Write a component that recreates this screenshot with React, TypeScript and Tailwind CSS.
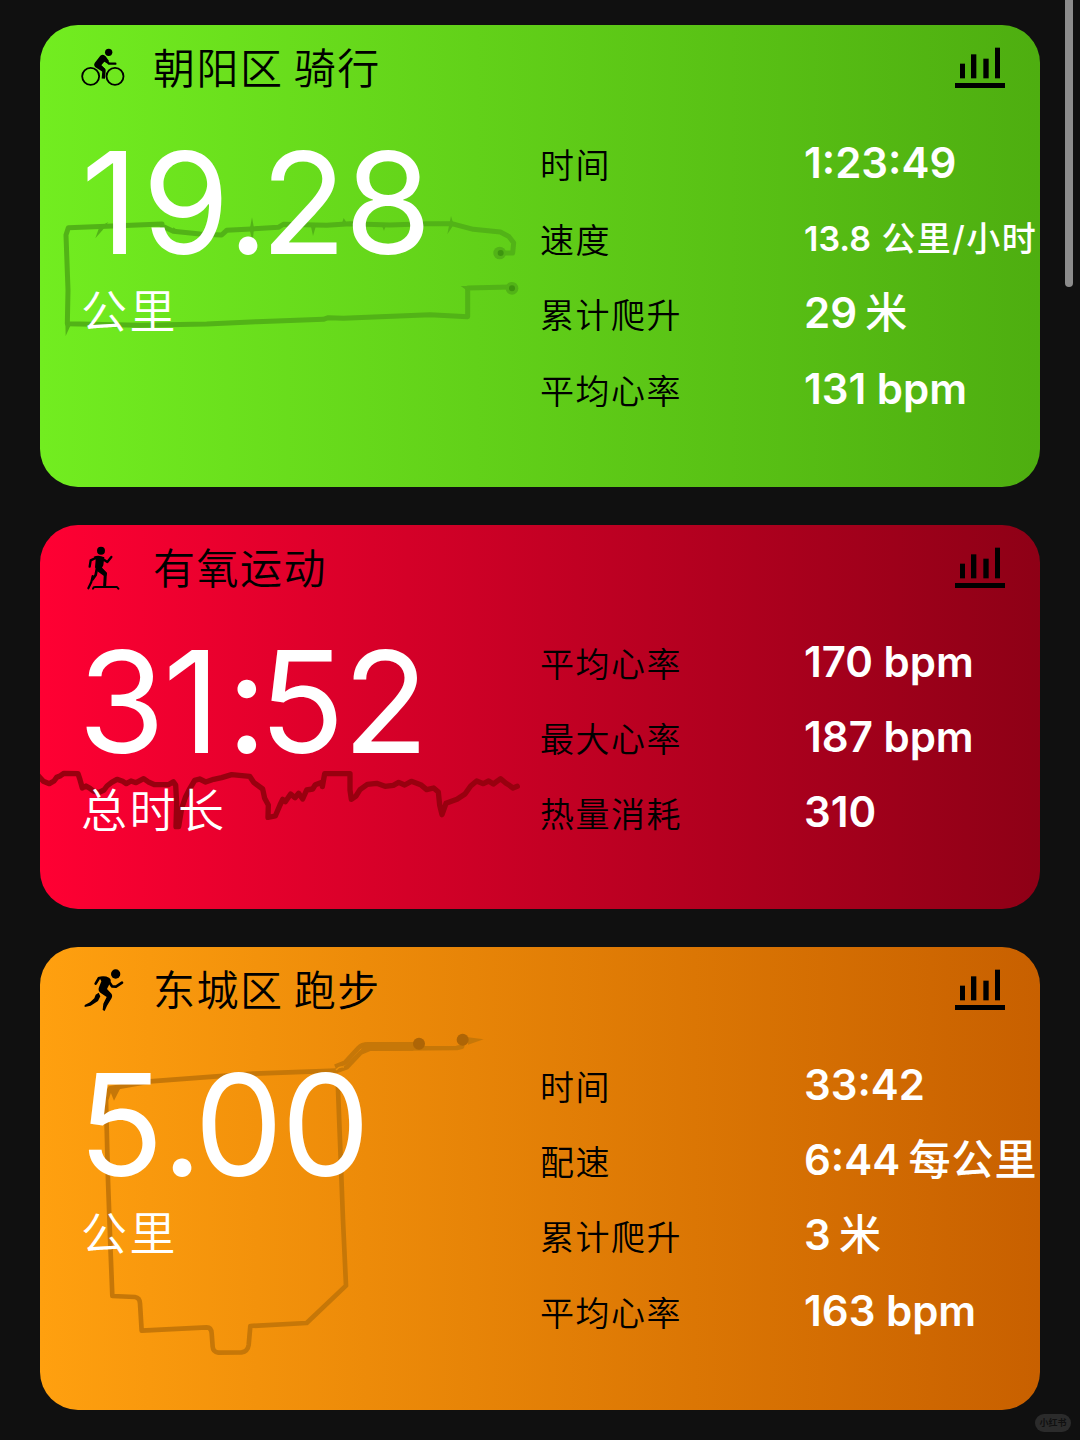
import type { ReactNode } from "react";

type Stat = {
  label: string;
  value: string;
  unit?: string;
  small?: boolean;
};

type WorkoutCardProps = {
  title: string;
  icon: ReactNode;
  trace: ReactNode;
  total: string;
  unit: string;
  stats: Stat[];
  className: string;
};

// letter spacing for the big total, keyed by glyph
const KERNING: Record<string, string> = {
  "1": "tracking-[6px] first:ml-[3px] first:tracking-[4px]",
  ".": "tracking-[-8px]",
  ":": "tracking-[-8px]",
};

function BikeIcon() {
  return (
    <svg viewBox="152 108 132 132" className="size-11">
      <g fill="none" stroke="currentColor">
        <circle cx="181" cy="199" r="25.5" strokeWidth="5.5" />
        <circle cx="254" cy="199" r="25.5" strokeWidth="5.5" />
        <path d="M226 151 L236 161 L255 161" strokeWidth="7" strokeLinecap="round" strokeLinejoin="round" />
        <path d="M203 164 L221 181 L219 206" strokeWidth="10" strokeLinejoin="round" />
      </g>
      <circle cx="235" cy="127" r="11" />
      <path d="M210 137 Q219 131 226 139 L236 153 L230 160 L222 155 L213 166 L225 177 L219 187 L194 171 Q189 165 193 159 Z" />
    </svg>
  );
}

function StepIcon() {
  return (
    <svg viewBox="152 78 132 132" className="size-11">
      <circle cx="212" cy="92" r="12" />
      <path d="M190 110 Q206 104 222 112 L219 136 L215 143 L230 159 L228 167 L220 167 L199 152 L194 142 L196 119 Z" />
      <g fill="none" stroke="currentColor" strokeLinecap="round" strokeLinejoin="round">
        <path d="M216 116 L231 126 L243 111" strokeWidth="7" />
        <path d="M196 114 L181 121 L178 140" strokeWidth="7" />
        <path d="M210 146 L225 161 L223 197" strokeWidth="9" />
        <path d="M199 149 L196 165 L187 178" strokeWidth="8" />
        <path d="M187 168 L183 186 L174 205" strokeWidth="6.5" />
        <path d="M188 206 Q189 201 194 201 L260 201 L264 206" strokeWidth="6" />
      </g>
    </svg>
  );
}

function RunIcon() {
  return (
    <svg viewBox="152 84 132 132" className="size-11">
      <circle cx="256" cy="102" r="14" />
      <path d="M207 111 Q222 106 236 113 Q244 118 240 127 L230 147 L244 162 Q247 168 244 174 L230 197 L223 213 L217 210 L219 191 L229 171 L210 158 Q202 152 206 142 L213 124 Z" />
      <path d="M205 158 L210 169 L203 183 L181 197 L163 201 L163 195 L179 187 L192 175 L196 164 Z" />
      <g fill="none" stroke="currentColor" strokeLinecap="round" strokeLinejoin="round">
        <path d="M216 114 L206 114 L196 131" strokeWidth="8" />
        <path d="M237 127 L245 139 L257 140 L275 128" strokeWidth="8" />
      </g>
    </svg>
  );
}

function ChartIcon() {
  return (
    <svg viewBox="45 138 150 126" className="h-[42px] w-[50px]">
      <rect x="60" y="188" width="15" height="44" />
      <rect x="93" y="160" width="16" height="72" />
      <rect x="130" y="173" width="16" height="59" />
      <rect x="165" y="140" width="15" height="92" />
      <rect x="45" y="246" width="150" height="15" />
    </svg>
  );
}

function RideTrace() {
  return (
    <svg
      viewBox="0 0 1500 660"
      className="absolute left-0 top-[105px] h-[220px] w-[500px] text-[#52b317]"
    >
      <g fill="none" stroke="currentColor" strokeWidth="15" strokeLinejoin="round">
        <path d="M1378 369 L1418 369 L1421 338 L1407 320 L1381 306 L1300 298 L1235 281 L1160 281 L1050 285 L930 281 L860 286 L730 283 L715 292 L560 301 L545 315 L480 312 L400 304 L366 288 L366 282 L200 289 L85 293 L78 315 L84 480 L82 581 L300 586 L500 582 L650 575 L850 568 L865 563 L910 565 L1020 560 L1170 554 L1283 560 L1283 474 L1414 471" />
      </g>
      <path d="M166 325 L178 291 L205 276 L188 300 Z M636 262 L642 295 L638 335 L629 299 Z M812 285 L828 287 L819 318 Z M1025 286 L1038 286 L1032 302 Z M911 264 L921 280 L906 280 Z M1233 258 L1241 284 L1222 313 Z M76 575 L92 585 L77 618 Z M1262 468 L1290 468 L1283 483 Z M400 292 L425 310 L398 308 Z" fill="currentColor" />
      <circle cx="1379" cy="369" r="19" fill="currentColor" />
      <circle cx="1416" cy="475" r="19" fill="currentColor" />
      <circle cx="1382" cy="369" r="9" fill="#3d950f" />
      <circle cx="1416" cy="475" r="9" fill="#3d950f" />
    </svg>
  );
}

function HeartTrace() {
  return (
    <svg
      viewBox="30 0 1470 660"
      className="absolute left-0 top-[105px] h-[220px] w-[490px] text-[#98000f]"
    >
      <path
        d="M25 437 L40 454 L58 461 L72 453 L80 442 L90 438 L102 430 L144 431 L150 449 L157 474 L168 468 L180 475 L190 483 L206 488 L222 480 L231 468 L245 457 L261 448 L278 454 L289 461 L303 453 L318 458 L341 446 L357 457 L374 464 L415 464 L430 455 L437 465 L440 520 L438 590 L446 590 L455 535 L467 500 L480 475 L494 451 L509 447 L527 456 L551 448 L575 443 L605 434 L659 439 L671 457 L698 477 L704 505 L715 525 L714 562 L736 558 L750 525 L758 508 L766 515 L782 492 L795 503 L806 490 L818 507 L830 480 L848 477 L856 464 L876 457 L877 470 L884 431 L960 431 L960 480 L964 508 L978 498 L990 479 L1012 463 L1040 460 L1065 469 L1090 466 L1106 457 L1124 465 L1144 454 L1172 464 L1190 479 L1211 474 L1225 486 L1229 525 L1236 554 L1248 520 L1281 508 L1305 492 L1322 468 L1340 453 L1360 461 L1376 453 L1390 462 L1412 446 L1428 460 L1438 466 L1449 474 L1462 469"
        fill="none"
        stroke="currentColor"
        strokeWidth="16"
        strokeLinejoin="round"
        strokeLinecap="round"
      />
    </svg>
  );
}

function RunTrace() {
  return (
    <svg
      viewBox="0 0 1500 1080"
      className="absolute left-0 top-[73px] h-[360px] w-[500px] text-[#c67708]"
    >
      <g fill="none" stroke="currentColor" strokeWidth="14" strokeLinejoin="round">
        <path d="M1268 62 L1266 80 L1250 84 L990 86 L962 98 L920 142 L890 152 L640 161 L330 184 L210 205 L198 240 L204 480 L212 700 L217 828 L285 831 Q299 833 300 850 L305 932 L500 922 Q514 922 515 940 L518 980 Q519 996 535 998 L605 997 Q623 995 626 975 L631 918 L800 909 L918 797 L909 600 L893 180" />
        <path d="M885 140 L915 128 L955 84 Q965 73 985 73 L1136 73" />
      </g>
      <path d="M975 68 H1120 V92 H975 L950 110 Z M200 207 L243 201 L222 242 L213 220 Z M1284 52 L1331 58 L1284 74 Z" fill="currentColor" />
      <path d="M888 150 Q897 138 912 141" fill="none" stroke="#ee9009" strokeWidth="4" />
      <circle cx="1137" cy="71" r="18" fill="#ae6506" />
      <circle cx="1268" cy="59" r="18" fill="#ae6506" />
    </svg>
  );
}

function WorkoutCard({ title, icon, trace, total, unit, stats, className }: WorkoutCardProps) {
  return (
    <section className={`relative shrink-0 overflow-hidden rounded-[38px] bg-linear-to-r ${className}`}>
      {trace}
      <header className="relative flex h-[86px] items-center pl-[41px] pr-[35px]">
        {icon}
        <h2 className="ml-[28px] flex-1 pt-[2px] text-[42px] font-[350] leading-[60px] tracking-[1.5px] [word-spacing:-3px]">
          {title}
        </h2>
        <ChartIcon />
      </header>
      <div className="relative flex pl-[41px] text-white">
        <div className="w-[459px] pt-[22px]">
          <p className="-ml-[3px] text-[141px] leading-[140px] tracking-[-2px]">
            {total.split("").map((char, i) => (
              <span key={i} className={KERNING[char]}>
                {char}
              </span>
            ))}
          </p>
          <p className="mt-[6px] text-[46px] font-[350] leading-[64px] tracking-[2.5px]">{unit}</p>
        </div>
        <dl className="grid flex-1 auto-rows-[75.4px] grid-cols-[264px_1fr] items-center pt-[14px]">
          {stats.map((stat) => (
            <div key={stat.label} className="contents">
              <dt className="pt-[6px] text-[34px] font-[350] leading-[48px] tracking-[1.5px] text-black">
                {stat.label}
              </dt>
              <dd
                className={
                  stat.small
                    ? "whitespace-nowrap pt-px text-[34px] font-semibold leading-[48px]"
                    : "whitespace-nowrap text-[42px] font-semibold leading-[60px]"
                }
              >
                {stat.value}
                {stat.unit && (
                  <span
                    className={
                      stat.small ? "font-medium tracking-[1.4px]" : "font-medium tracking-[1px] [word-spacing:-4px]"
                    }
                  >
                    {" "}
                    {stat.unit}
                  </span>
                )}
              </dd>
            </div>
          ))}
        </dl>
      </div>
    </section>
  );
}

export default function App() {
  return (
    <main
      lang="zh-CN"
      className="relative flex h-[1440px] w-[1080px] flex-col gap-[38px] overflow-hidden bg-[#101010] px-10 pt-[25px] font-[Inter,'Noto_Sans_CJK_SC',sans-serif] text-black"
    >
      <WorkoutCard
        title="朝阳区 骑行"
        icon={<BikeIcon />}
        trace={<RideTrace />}
        total="19.28"
        unit="公里"
        className="h-[462px] from-[#72ed20] to-[#4eae10]"
        stats={[
          { label: "时间", value: "1:23:49" },
          { label: "速度", value: "13.8", unit: "公里/小时", small: true },
          { label: "累计爬升", value: "29", unit: "米" },
          { label: "平均心率", value: "131 bpm" },
        ]}
      />
      <WorkoutCard
        title="有氧运动"
        icon={<StepIcon />}
        trace={<HeartTrace />}
        total="31:52"
        unit="总时长"
        className="h-[384px] from-[#ff0033] to-[#8e0016] [&>div]:-mt-px"
        stats={[
          { label: "平均心率", value: "170 bpm" },
          { label: "最大心率", value: "187 bpm" },
          { label: "热量消耗", value: "310" },
        ]}
      />
      <WorkoutCard
        title="东城区 跑步"
        icon={<RunIcon />}
        trace={<RunTrace />}
        total="5.00"
        unit="公里"
        className="h-[463px] from-[#ffa00f] to-[#c86000]"
        stats={[
          { label: "时间", value: "33:42" },
          { label: "配速", value: "6:44", unit: "每公里" },
          { label: "累计爬升", value: "3", unit: "米" },
          { label: "平均心率", value: "163 bpm" },
        ]}
      />
      <div className="absolute right-[7px] top-0 h-[287px] w-2 rounded-b-full bg-[#8c8c8c]" />
      <span className="absolute bottom-[8px] right-[9px] flex h-[18px] w-9 items-center justify-center rounded-full bg-[#2b2b2b] text-[9px] font-bold text-[#101010]">
        小红书
      </span>
    </main>
  );
}
